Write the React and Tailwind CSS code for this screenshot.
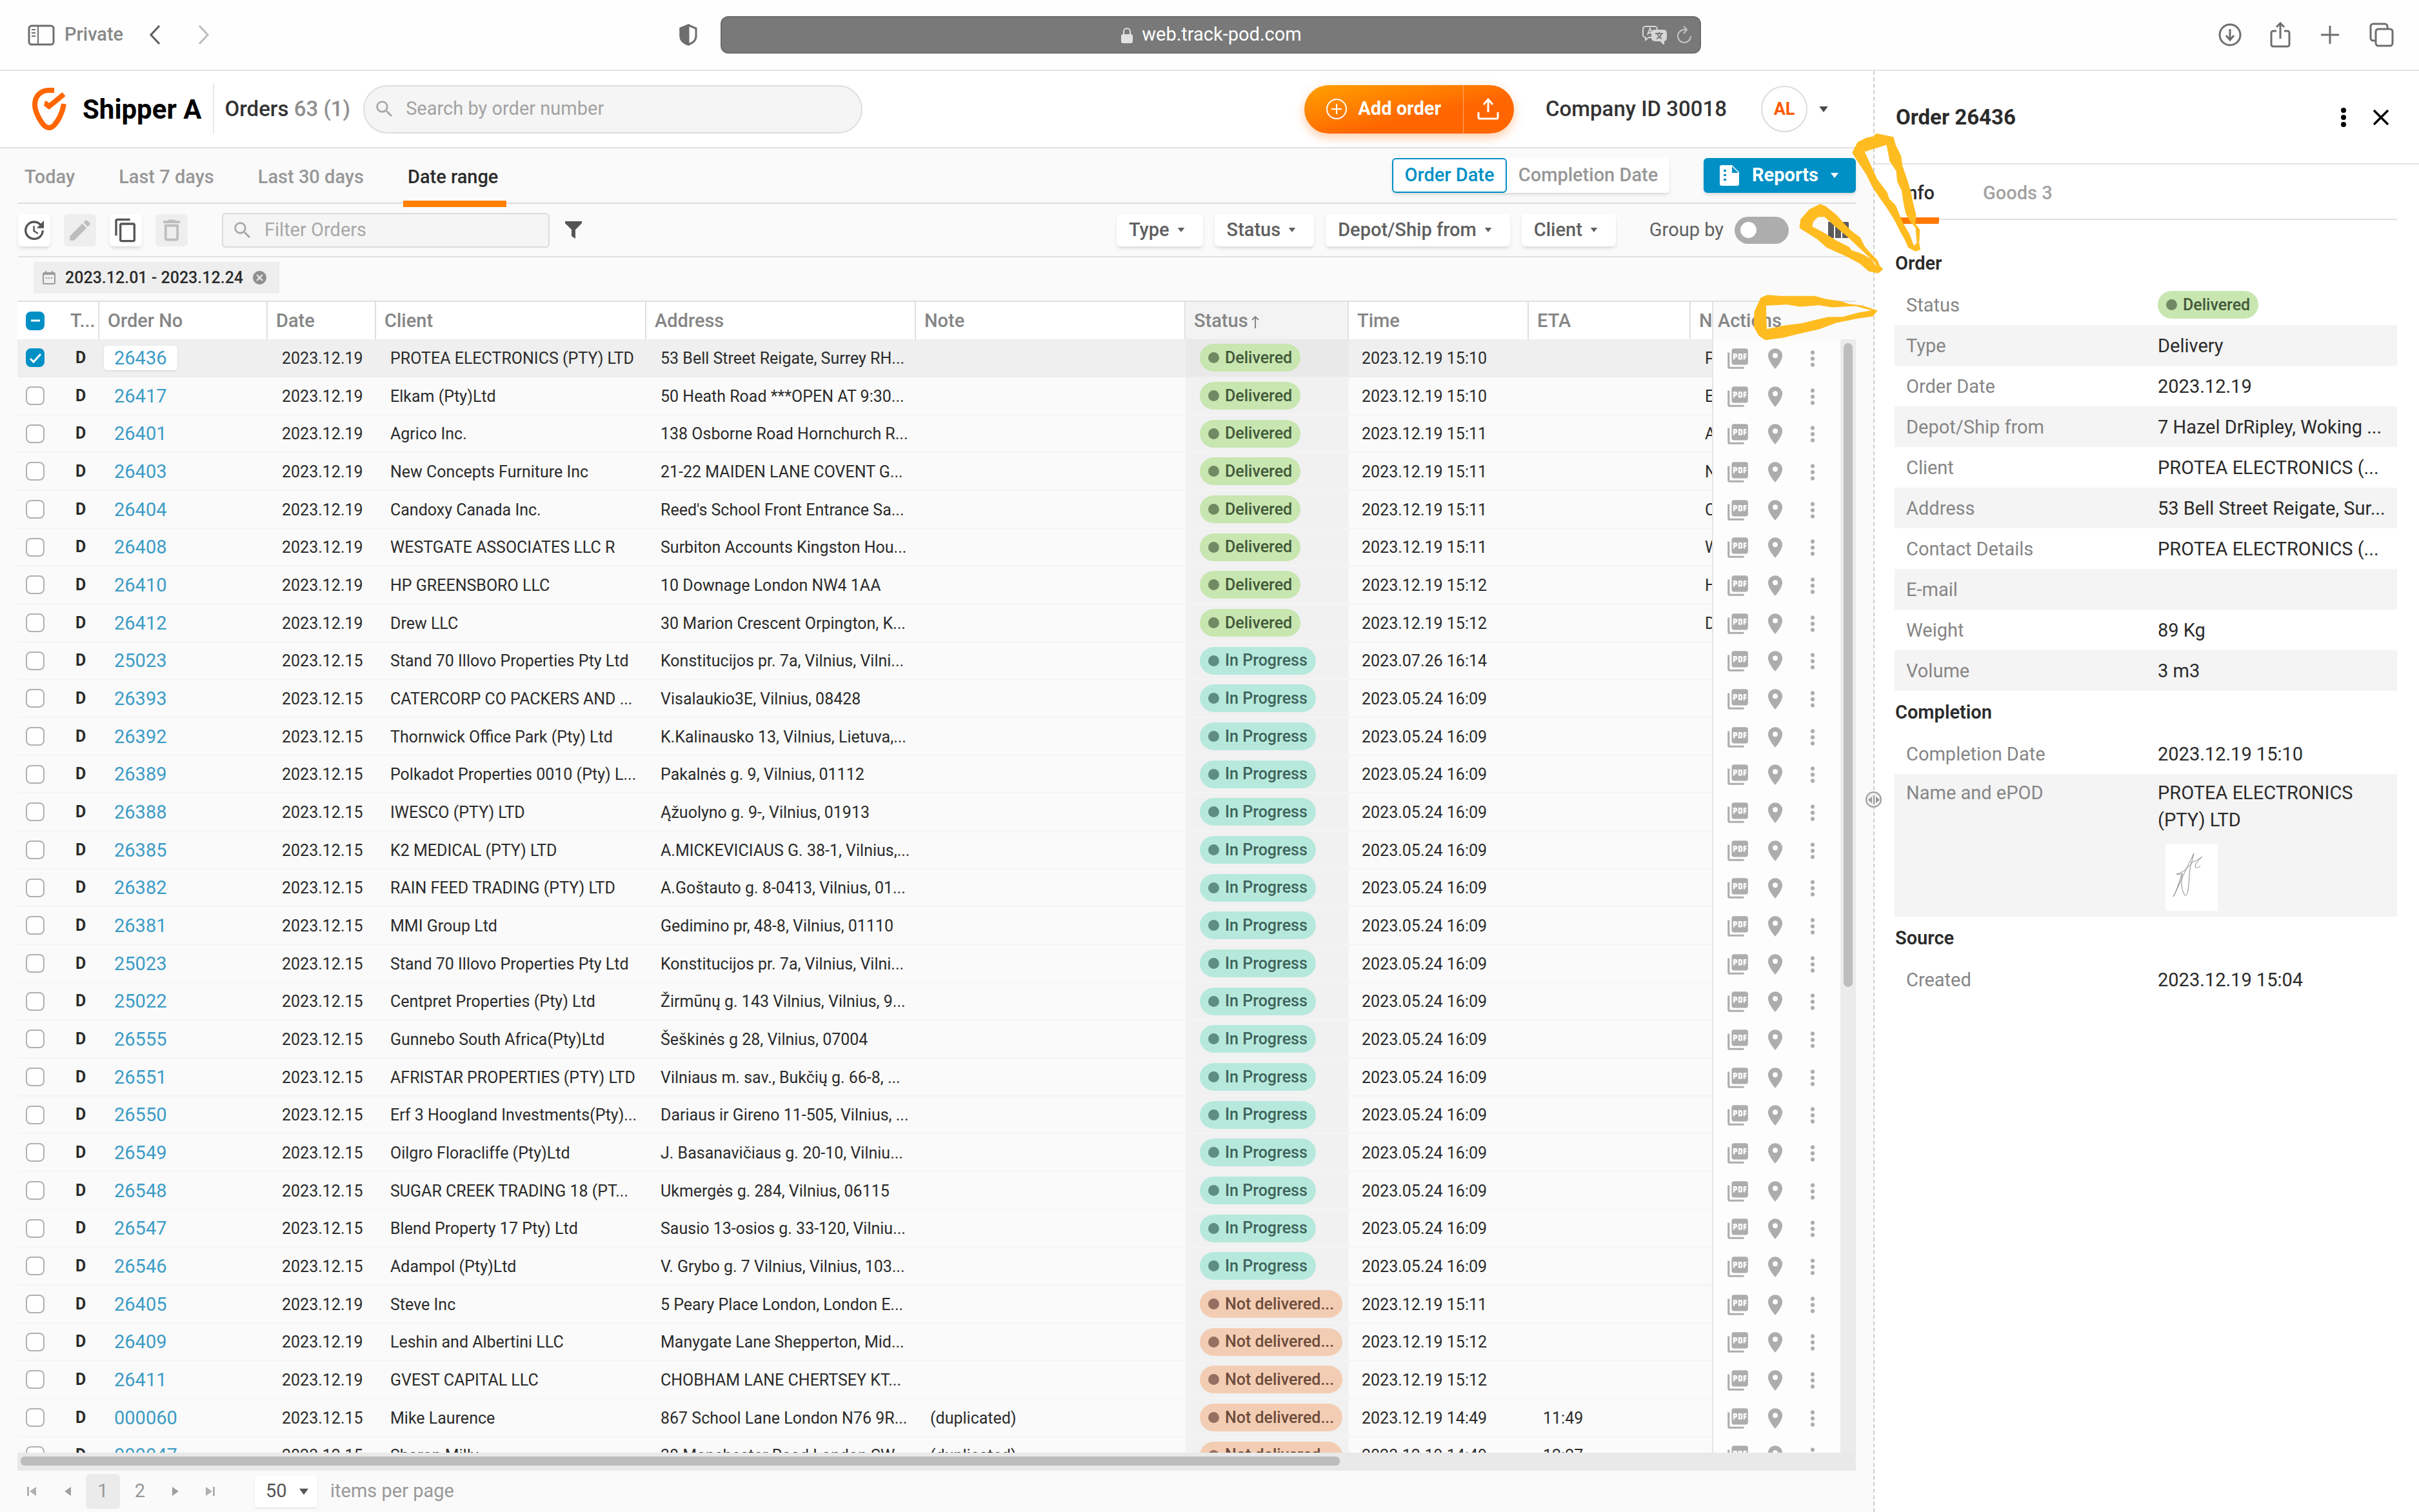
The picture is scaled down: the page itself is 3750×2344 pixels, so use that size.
import { useState } from 'react';
import {
    MdUpdate,
    MdEdit,
    MdContentCopy,
    MdDeleteOutline,
    MdSearch,
    MdPictureAsPdf,
    MdLocationOn,
    MdMoreVert,
    MdClose,
    MdCancel,
} from 'react-icons/md';

const delivered = [
    ['26436', 'PROTEA ELECTRONICS (PTY) LTD', '53 Bell Street Reigate, Surrey RH...', '15:10'],
    ['26417', 'Elkam (Pty)Ltd', '50 Heath Road ***OPEN AT 9:30...', '15:10'],
    ['26401', 'Agrico Inc.', '138 Osborne Road Hornchurch R...', '15:11'],
    ['26403', 'New Concepts Furniture Inc', '21-22 MAIDEN LANE COVENT G...', '15:11'],
    ['26404', 'Candoxy Canada Inc.', "Reed's School Front Entrance Sa...", '15:11'],
    ['26408', 'WESTGATE ASSOCIATES LLC R', 'Surbiton Accounts Kingston Hou...', '15:11'],
    ['26410', 'HP GREENSBORO LLC', '10 Downage London NW4 1AA', '15:12'],
    ['26412', 'Drew LLC', '30 Marion Crescent Orpington, K...', '15:12'],
];

const inProgress = [
    ['25023', 'Stand 70 Illovo Properties Pty Ltd', 'Konstitucijos pr. 7a, Vilnius, Vilni...', '2023.07.26 16:14'],
    ['26393', 'CATERCORP CO PACKERS AND ...', 'Visalaukio3E, Vilnius, 08428'],
    ['26392', 'Thornwick Office Park (Pty) Ltd', 'K.Kalinausko 13, Vilnius, Lietuva,...'],
    ['26389', 'Polkadot Properties 0010 (Pty) L...', 'Pakalnės g. 9, Vilnius, 01112'],
    ['26388', 'IWESCO (PTY) LTD', 'Ąžuolyno g. 9-, Vilnius, 01913'],
    ['26385', 'K2 MEDICAL (PTY) LTD', 'A.MICKEVICIAUS G. 38-1, Vilnius,...'],
    ['26382', 'RAIN FEED TRADING (PTY) LTD', 'A.Goštauto g. 8-0413, Vilnius, 01...'],
    ['26381', 'MMI Group Ltd', 'Gedimino pr, 48-8, Vilnius, 01110'],
    ['25023', 'Stand 70 Illovo Properties Pty Ltd', 'Konstitucijos pr. 7a, Vilnius, Vilni...'],
    ['25022', 'Centpret Properties (Pty) Ltd', 'Žirmūnų g. 143 Vilnius, Vilnius, 9...'],
    ['26555', 'Gunnebo South Africa(Pty)Ltd', 'Šeškinės g 28, Vilnius, 07004'],
    ['26551', 'AFRISTAR PROPERTIES (PTY) LTD', 'Vilniaus m. sav., Bukčių g. 66-8, ...'],
    ['26550', 'Erf 3 Hoogland Investments(Pty)...', 'Dariaus ir Gireno 11-505, Vilnius, ...'],
    ['26549', 'Oilgro Floracliffe (Pty)Ltd', 'J. Basanavičiaus g. 20-10, Vilniu...'],
    ['26548', 'SUGAR CREEK TRADING 18 (PT...', 'Ukmergės g. 284, Vilnius, 06115'],
    ['26547', 'Blend Property 17 Pty) Ltd', 'Sausio 13-osios g. 33-120, Vilniu...'],
    ['26546', 'Adampol (Pty)Ltd', 'V. Grybo g. 7 Vilnius, Vilnius, 103...'],
];

const orders = [
    ...delivered.map(([no, client, address, time]) => ({
        no,
        client,
        address,
        date: '2023.12.19',
        status: 'Delivered',
        time: `2023.12.19 ${time}`,
        name: client.charAt(0),
    })),
    ...inProgress.map(([no, client, address, time = '2023.05.24 16:09']) => ({
        no,
        client,
        address,
        date: '2023.12.15',
        status: 'In Progress',
        time,
    })),
    { no: '26405', date: '2023.12.19', client: 'Steve Inc', address: '5 Peary Place London, London E...', status: 'Not delivered...', time: '2023.12.19 15:11' },
    { no: '26409', date: '2023.12.19', client: 'Leshin and Albertini LLC', address: 'Manygate Lane Shepperton, Mid...', status: 'Not delivered...', time: '2023.12.19 15:12' },
    { no: '26411', date: '2023.12.19', client: 'GVEST CAPITAL LLC', address: 'CHOBHAM LANE CHERTSEY KT...', status: 'Not delivered...', time: '2023.12.19 15:12' },
    { no: '000060', date: '2023.12.15', client: 'Mike Laurence', address: '867 School Lane London N76 9R...', note: '(duplicated)', status: 'Not delivered...', time: '2023.12.19 14:49', eta: '11:49' },
    { no: '000047', date: '2023.12.15', client: 'Sharon Milly', address: '38 Manchester Road London SW...', note: '(duplicated)', status: 'Not delivered...', time: '2023.12.19 14:49', eta: '12:27' },
];

const badgeStyles = {
    Delivered: 'bg-[#c8e6b0] text-[#43593a]',
    'In Progress': 'bg-[#b6e9dc] text-[#3f635b]',
    'Not delivered...': 'bg-[#f3cdb3] text-[#6d4c3c]',
};

const dotStyles = {
    Delivered: 'bg-[#718a63]',
    'In Progress': 'bg-[#5f8d83]',
    'Not delivered...': 'bg-[#957062]',
};

const columns = [
    ['Order No', 'w-[261px]'],
    ['Date', 'w-[168px]'],
    ['Client', 'w-[419px]'],
    ['Address', 'w-[418px]'],
    ['Note', 'w-[418px]'],
    ['Status', 'w-[253px]'],
    ['Time', 'w-[279px]'],
    ['ETA', 'w-[251px]'],
    ['N', 'w-[33px]'],
];

const orderInfo = [
    ['Status', 'Delivered'],
    ['Type', 'Delivery'],
    ['Order Date', '2023.12.19'],
    ['Depot/Ship from', '7 Hazel DrRipley, Woking ...'],
    ['Client', 'PROTEA ELECTRONICS (...'],
    ['Address', '53 Bell Street Reigate, Sur...'],
    ['Contact Details', 'PROTEA ELECTRONICS (...'],
    ['E-mail', ''],
    ['Weight', '89 Kg'],
    ['Volume', '3 m3'],
];

function Badge({ status }) {
    return (
        <span
            className={`inline-flex h-[43px] items-center gap-[9px] rounded-full px-[13px] text-[25px] font-medium ${badgeStyles[status]}`}
        >
            <span className={`size-[17px] rounded-full ${dotStyles[status]}`} />
            {status}
        </span>
    );
}

function Checkbox({ label, checked, dash, onChange }) {
    return (
        <span className="grid size-[29px] place-items-center">
            <input
                type="checkbox"
                aria-label={label}
                checked={checked}
                onChange={onChange}
                className="col-start-1 row-start-1 size-[29px] appearance-none rounded-[8px] border-2 border-[#b0b0b0] bg-white checked:border-[#0090c5] checked:bg-[#0090c5]"
            />
            {checked && (
                <svg viewBox="0 0 24 24" className="pointer-events-none col-start-1 row-start-1 size-[24px]" fill="none" stroke="#fff" strokeWidth="3">
                    <path d={dash ? 'M5 12h14' : 'M4 13l5 5L20 6'} />
                </svg>
            )}
        </span>
    );
}

function Caret({ className }) {
    return (
        <svg viewBox="0 0 12 8" className={className} fill="currentColor">
            <path d="M0 0h12L6 8z" />
        </svg>
    );
}

function BrowserBar() {
    return (
        <header className="flex h-[110px] shrink-0 items-center border-b-2 border-[#e4e4e4] bg-[#fefefe] pr-[39px] pl-[43px] text-[#6e6e6e]">
            <div className="flex flex-1 items-center">
                <svg viewBox="0 0 42 33" className="h-[33px] w-[42px]" fill="none" stroke="currentColor" strokeWidth="3">
                    <rect x="2" y="2" width="38" height="29" rx="4" />
                    <path d="M16 2v29M6 8h6M6 13h6M6 18h6" strokeWidth="2" />
                </svg>
                <span className="ml-[15px] text-[29px] font-medium text-[#888]">Private</span>
                <button aria-label="Back" className="ml-[40px]">
                    <svg viewBox="0 0 18 30" className="h-[30px] w-[18px]" fill="none" stroke="#5c5c5c" strokeWidth="3">
                        <path d="M16 1L3 15l13 14" />
                    </svg>
                </button>
                <button aria-label="Forward" className="ml-[58px]">
                    <svg viewBox="0 0 18 30" className="h-[30px] w-[18px]" fill="none" stroke="#bdbdbd" strokeWidth="3">
                        <path d="M2 1l13 14L2 29" />
                    </svg>
                </button>
                <svg viewBox="0 0 30 34" className="mr-[35px] ml-auto h-[34px] w-[30px]" fill="none" stroke="currentColor" strokeWidth="3">
                    <path d="M15 2l12 5v12c0 7-6 11-12 13C9 30 3 26 3 19V7z" />
                    <path d="M15 2v30C9 30 3 26 3 19V7z" fill="currentColor" />
                </svg>
            </div>
            <div className="flex h-[58px] w-[1520px] items-center rounded-[12px] border-2 border-[#6c6c6c] bg-[#797979] pr-[12px] pl-[92px] text-white">
                <div className="flex flex-1 items-center justify-center gap-[14px]">
                    <svg viewBox="0 0 18 25" className="h-[25px] w-[18px]" fill="#e2e2e2">
                        <rect x="0" y="11" width="18" height="14" rx="3" />
                        <path d="M4 11V7a5 5 0 0 1 10 0v4" fill="none" stroke="#e2e2e2" strokeWidth="2" />
                    </svg>
                    <span className="text-[29px]">web.track-pod.com</span>
                </div>
                <button aria-label="Translate">
                    <svg viewBox="0 0 40 30" className="h-[30px] w-[40px]" fill="none" stroke="#d6d6d6" strokeWidth="2">
                        <path d="M6 2h14a4 4 0 0 1 4 4v4M6 2a4 4 0 0 0-4 4v9a4 4 0 0 0 4 4v4l5-4h4" />
                        <path d="M9 15l4-10 4 10M10 12h6" />
                        <path d="M20 8h14a4 4 0 0 1 4 4v8a4 4 0 0 1-4 4v5l-5-5h-9a4 4 0 0 1-4-4v-8a4 4 0 0 1 4-4z" fill="#d6d6d6" />
                        <path d="M21 13h12M27 11v2M23 21c5-2 7-5 7-8M31 21c-4-2-6-5-7-8" stroke="#797979" />
                    </svg>
                </button>
                <button aria-label="Reload" className="ml-[14px]">
                    <svg viewBox="0 0 24 28" className="h-[28px] w-[24px]" fill="none" stroke="#c4c4c4" strokeWidth="2">
                        <path d="M22 16a10 10 0 1 1-10-10h4M11 1l5 5-5 6" />
                    </svg>
                </button>
            </div>
            <div className="flex flex-1 items-center justify-end">
                <button aria-label="Downloads">
                    <svg viewBox="0 0 36 36" className="size-[36px]" fill="none" stroke="currentColor" strokeWidth="3">
                        <circle cx="18" cy="18" r="16" />
                        <path d="M18 9v16M12 19l6 7 6-7" />
                    </svg>
                </button>
                <button aria-label="Share" className="ml-[44px]">
                    <svg viewBox="0 0 32 40" className="h-[40px] w-[32px]" fill="none" stroke="currentColor" strokeWidth="3">
                        <path d="M10 14H5a3 3 0 0 0-3 3v18a3 3 0 0 0 3 3h22a3 3 0 0 0 3-3V17a3 3 0 0 0-3-3h-5M16 26V3M10 8l6-6 6 6" />
                    </svg>
                </button>
                <button aria-label="New tab" className="ml-[46px]">
                    <svg viewBox="0 0 30 30" className="size-[30px]" fill="none" stroke="currentColor" strokeWidth="3">
                        <path d="M15 1v28M1 15h28" />
                    </svg>
                </button>
                <button aria-label="Show tabs" className="ml-[46px]">
                    <svg viewBox="0 0 38 38" className="size-[38px]" fill="none" stroke="currentColor" strokeWidth="3">
                        <path d="M10 28H6a4 4 0 0 1-4-4V6a4 4 0 0 1 4-4h18a4 4 0 0 1 4 4v4" />
                        <rect x="10" y="10" width="26" height="26" rx="4" />
                    </svg>
                </button>
            </div>
        </header>
    );
}

function AppHeader() {
    return (
        <div className="flex h-[120px] shrink-0 items-center border-b-2 border-[#e2e2e2] bg-white pr-[69px] pl-[50px]">
            <svg viewBox="0 0 54 66" className="h-[66px] w-[54px]" fill="none" stroke="#ff6600" strokeWidth="8">
                <path d="M34 4H26C12 4 4 14 4 26c0 11 8 26 15 33 5 4 10 4 14 0 7-7 14-20 16-34" />
                <path d="M19 24c4 1 5 4 7 5L49 10" strokeWidth="8" />
            </svg>
            <span className="ml-[24px] text-[42px] font-bold text-black">Shipper A</span>
            <span className="ml-[18px] h-[78px] border-l-2 border-[#e8e8e8]" />
            <h1 className="ml-[16px] text-[33px] font-medium text-[#333]">
                Orders <span className="text-[#8f8f8f]">63 (1)</span>
            </h1>
            <label className="ml-[20px] flex h-[75px] w-[774px] items-center rounded-full border-2 border-[#dedede] bg-[#f5f5f5] pl-[14px]">
                <MdSearch className="size-[34px] text-[#a8a8a8]" />
                <input
                    aria-label="Search by order number"
                    placeholder="Search by order number"
                    className="ml-[16px] flex-1 bg-transparent text-[29px] outline-none placeholder:text-[#a2a2a2]"
                />
            </label>
            <div className="ml-auto flex h-[75px] rounded-full bg-linear-to-br from-[#ffa000] to-[#ff6600] to-60% text-white shadow-[0_6px_16px_rgba(255,110,0,0.35)]">
                <button className="flex items-center gap-[16px] border-r border-[#ffa566] pr-[34px] pl-[33px] text-[29px] font-bold">
                    <svg viewBox="0 0 34 34" className="size-[34px]" fill="none" stroke="#fff" strokeWidth="2">
                        <circle cx="17" cy="17" r="15" />
                        <path d="M17 9v16M9 17h16" />
                    </svg>
                    Add order
                </button>
                <button aria-label="Import orders" className="pr-[23px] pl-[21px]">
                    <svg viewBox="0 0 34 34" className="size-[34px]" fill="none" stroke="#fff" strokeWidth="3">
                        <path d="M17 22V3M10 10l7-8 7 8" />
                        <path d="M2 22v8a2 2 0 0 0 2 2h26a2 2 0 0 0 2-2v-8" />
                    </svg>
                </button>
            </div>
            <span className="ml-[49px] text-[33px] font-medium text-[#333]">Company ID 30018</span>
            <button className="ml-[53px] flex items-center gap-[17px] text-[27px] font-bold text-[#ff5a00]">
                <span className="grid size-[72px] place-items-center rounded-full border-2 border-[#dcdcdc] bg-white">AL</span>
                <Caret className="h-[9px] w-[16px] text-[#4a4a4a]" />
            </button>
        </div>
    );
}

function Tabs() {
    return (
        <div className="mr-[27px] ml-[28px] flex h-[86px] shrink-0 items-center border-b-2 border-[#dedede] text-[29px] font-medium">
            <nav className="flex h-full gap-[54px] pl-[3px] text-[#979797]">
                {['Today', 'Last 7 days', 'Last 30 days'].map((tab) => (
                    <button key={tab} className="px-[7px] pt-[6px]">
                        {tab}
                    </button>
                ))}
                <button className="-mb-[5px] h-[91px] border-b-10 border-[#ff7f00] pt-[8px] pr-[13px] pl-[7px] text-[#2b2b2b]">Date range</button>
            </nav>
            <div className="ml-auto flex h-[54px] rounded-[6px] bg-white shadow-md">
                <button className="w-[178px] rounded-[6px] border-2 border-[#0090c5] text-[#0090c5]">Order Date</button>
                <button className="w-[252px] text-[#979797]">Completion Date</button>
            </div>
            <button className="ml-[53px] flex h-[54px] w-[236px] items-center rounded-[6px] bg-[#0090c5] pl-[25px] text-white shadow-md">
                <svg viewBox="0 0 32 32" className="size-[32px]">
                    <path d="M3 0h16l11 11v18a3 3 0 0 1-3 3H3a3 3 0 0 1-3-3V3a3 3 0 0 1 3-3z" fill="#fff" />
                    <path d="M19 2v10h10zM6 7h4v3H6zM6 14h4v3H6zM6 21h4v3H6z" fill="#0090c5" />
                </svg>
                <span className="ml-[18px] font-bold">Reports</span>
                <Caret className="ml-[18px] h-[8px] w-[14px]" />
            </button>
        </div>
    );
}

function Toolbar() {
    const [grouped, setGrouped] = useState(false);

    return (
        <div className="mr-[38px] ml-[28px] flex h-[83px] shrink-0 items-center border-b-2 border-[#e2e2e2] text-[29px]">
            <div className="flex gap-[21px]">
                <button aria-label="Refresh" className="grid size-[50px] place-items-center rounded-[6px] bg-white text-[#555] shadow-md">
                    <MdUpdate className="size-[40px]" />
                </button>
                <button aria-label="Edit" className="grid size-[50px] place-items-center rounded-[6px] bg-[#eee] text-[#bdbdbd]">
                    <MdEdit className="size-[42px]" />
                </button>
                <button aria-label="Copy" className="grid size-[50px] place-items-center rounded-[6px] bg-white text-[#555] shadow-md">
                    <MdContentCopy className="size-[40px]" />
                </button>
                <button aria-label="Delete" className="grid size-[50px] place-items-center rounded-[6px] bg-[#eee] text-[#bdbdbd]">
                    <MdDeleteOutline className="size-[44px]" />
                </button>
            </div>
            <label className="ml-[53px] flex h-[54px] w-[508px] items-center rounded-[6px] border-2 border-[#dcdcdc] bg-[#f5f5f5] pl-[13px]">
                <MdSearch className="size-[34px] text-[#a8a8a8]" />
                <input
                    aria-label="Filter Orders"
                    placeholder="Filter Orders"
                    className="ml-[17px] w-[300px] bg-transparent text-[29px] outline-none placeholder:text-[#a8a8a8]"
                />
            </label>
            <button aria-label="Filter" className="ml-[24px]">
                <svg viewBox="0 0 26 27" className="h-[27px] w-[26px]" fill="#555">
                    <path d="M0 0h26v3L16 13v14l-6-4V13L0 3z" />
                </svg>
            </button>
            <div className="ml-auto flex items-center gap-[18px] font-medium text-[#606060]">
                {['Type', 'Status', 'Depot/Ship from', 'Client'].map((name) => (
                    <button key={name} className="flex h-[50px] items-center gap-[12px] rounded-[6px] bg-white px-[19px] shadow-md">
                        {name}
                        <Caret className="mr-[9px] h-[7px] w-[12px]" />
                    </button>
                ))}
            </div>
            <label className="ml-[52px] flex items-center gap-[17px] text-[#606060]">
                Group by
                <input
                    type="checkbox"
                    role="switch"
                    checked={grouped}
                    onChange={() => setGrouped(!grouped)}
                    className="flex h-[42px] w-[84px] appearance-none items-center rounded-full bg-[#adadad] px-[9px] before:size-[25px] before:rounded-full before:bg-white checked:justify-end checked:bg-[#0090c5]"
                />
            </label>
            <button aria-label="Columns" className="ml-[61px]">
                <svg viewBox="0 0 32 25" className="h-[25px] w-[32px]" fill="#5a5a5a">
                    <path d="M0 0h9v25H2a2 2 0 0 1-2-2zM11 0h9v25h-9zM22 0h8a2 2 0 0 1 2 2v21a2 2 0 0 1-2 2h-8z" />
                </svg>
            </button>
        </div>
    );
}

function DateChip() {
    return (
        <div className="flex h-[67px] shrink-0 items-center pb-[4px] pl-[52px]">
            <div className="flex h-[49px] items-center bg-[#eee] pr-[18px] pl-[14px] text-[25px] font-medium text-[#2b2b2b]">
                <svg viewBox="0 0 20 21" className="h-[21px] w-[20px]" fill="none" stroke="#9a9a9a" strokeWidth="2">
                    <rect x="1" y="3" width="18" height="17" rx="2" />
                    <path d="M5 0v4M15 0v4M5 11h2M9 11h2M13 11h2M1 5h18" />
                </svg>
                <span className="ml-[15px]">2023.12.01 - 2023.12.24</span>
                <button aria-label="Remove date filter" className="ml-[13px] text-[#8f8f8f]">
                    <MdCancel className="size-[25px]" />
                </button>
            </div>
        </div>
    );
}

function OrderRow({ order, selected, onSelect }) {
    const cell = `overflow-hidden border-b-2 whitespace-nowrap p-0 pl-[22px] ${selected ? 'border-[#ebebeb] bg-[#efefef]' : 'border-[#f4f4f4]'}`;

    return (
        <tr className="h-[59px] nth-[3n]:h-[58px]">
            <td className={`${cell} pl-[13px]!`}>
                <Checkbox label={`Select order ${order.no}`} checked={selected} onChange={onSelect} />
            </td>
            <td className={`${cell} pl-[17px]! font-bold`}>D</td>
            <td className={`${cell} pl-[7px]!`}>
                <a
                    href="#order"
                    className={`inline-block rounded-[5px] px-[16px] text-[29px] leading-[38px] text-[#3d9cc6] ${selected ? 'bg-white shadow-sm' : ''}`}
                >
                    {order.no}
                </a>
            </td>
            <td className={`${cell} pt-[2px]!`}>{order.date}</td>
            <td className={`${cell} pt-[2px]!`}>{order.client}</td>
            <td className={`${cell} pt-[2px]!`}>{order.address}</td>
            <td className={`${cell} pt-[2px]!`}>{order.note}</td>
            <td className={`${cell} ${selected ? 'bg-[#e9e9e9]!' : 'bg-[#f1f1f1]'}`}>
                <div className="flex">
                    <Badge status={order.status} />
                </div>
            </td>
            <td className={`${cell} pt-[2px]! pl-[20px]!`}>{order.time}</td>
            <td className={`${cell} pt-[2px]!`}>{order.eta}</td>
            <td className={`${cell} pt-[2px]!`}>{order.name}</td>
            <td className="border-l-2 border-[#e4e4e4] bg-[#fdfdfd] p-0 pl-[19px]">
                <div className="flex items-center text-[#adadad]">
                    <button aria-label="PDF">
                        <MdPictureAsPdf className="size-[38px]" />
                    </button>
                    <button aria-label="Show on map" className="ml-[20px]">
                        <MdLocationOn className="size-[38px]" />
                    </button>
                    <button aria-label="More" className="ml-[20px]">
                        <MdMoreVert className="size-[38px]" />
                    </button>
                </div>
            </td>
        </tr>
    );
}

function OrdersTable() {
    const [selected, setSelected] = useState([0]);

    const toggle = (index) => {
        setSelected(selected.includes(index) ? selected.filter((i) => i !== index) : [...selected, index]);
    };

    return (
        <div className="mr-[27px] ml-[27px] flex min-h-0 flex-1 flex-col">
            <div className="flex min-h-0 flex-1">
                <div className="min-w-0 flex-1 overflow-hidden">
                    <table className="w-full table-fixed border-separate border-spacing-0 text-[25px] leading-[30px] text-[#2b2b2b]">
                        <thead>
                            <tr className="h-[60px] text-left text-[29px] text-[#868686]">
                                <th className="w-[73px] border-t-2 border-[#e0e0e0] bg-white p-0 pl-[13px]">
                                    <Checkbox label="Select all" checked={selected.length > 0} dash onChange={() => setSelected([])} />
                                </th>
                                <th className="w-[54px] border-t-2 border-r-2 border-[#e0e0e0] bg-white p-0 pl-[9px] font-medium">T...</th>
                                {columns.map(([name, width]) => (
                                    <th
                                        key={name}
                                        className={`overflow-hidden border-t-2 border-[#e0e0e0] p-0 pl-[13px] font-medium whitespace-nowrap ${width} ${name === 'Status' ? 'bg-[#f3f3f3]' : 'bg-white'} ${name === 'N' ? '' : 'border-r-2'}`}
                                    >
                                        {name}
                                        {name === 'Status' && (
                                            <svg viewBox="0 0 12 20" className="ml-[5px] inline h-[20px] w-[12px]" fill="none" stroke="currentColor" strokeWidth="2">
                                                <path d="M6 20V2M1 7l5-5 5 5" />
                                            </svg>
                                        )}
                                    </th>
                                ))}
                                <th className="w-[199px] border-t-2 border-l-2 border-[#e0e0e0] bg-[#fafafa] p-0 pl-[7px] font-medium">Actions</th>
                            </tr>
                        </thead>
                        <tbody>
                            {orders.map((order, index) => (
                                <OrderRow key={index} order={order} selected={selected.includes(index)} onSelect={() => toggle(index)} />
                            ))}
                        </tbody>
                    </table>
                </div>
                <div className="flex w-[24px] flex-col">
                    <div className="h-[60px] border-t-2 border-[#e0e0e0]" />
                    <div className="flex-1 bg-[#ebebeb] px-[5px] pt-[6px]">
                        <div className="h-[58%] rounded-full bg-[#bdbdbd]" />
                    </div>
                </div>
            </div>
            <div className="h-[28px] shrink-0 bg-[#e9e9e9] px-[5px] py-[6px]">
                <div className="h-[14px] w-[72%] rounded-[6px] bg-[#bdbdbd]" />
            </div>
        </div>
    );
}

function Pager() {
    return (
        <footer className="flex h-[64px] shrink-0 items-center pl-[42px] text-[29px] text-[#999]">
            <button aria-label="First page">
                <svg viewBox="0 0 14 14" className="size-[14px]" fill="#b0b0b0">
                    <path d="M0 0h3v14H0zM14 0v14L4 7z" />
                </svg>
            </button>
            <button aria-label="Previous page" className="ml-[44px]">
                <svg viewBox="0 0 10 14" className="h-[14px] w-[10px]" fill="#a0a0a0">
                    <path d="M10 0v14L0 7z" />
                </svg>
            </button>
            <button className="ml-[23px] h-[54px] w-[53px] rounded-[6px] bg-[#ebebeb]">1</button>
            <button className="ml-[6px] w-[50px]">2</button>
            <button aria-label="Next page" className="ml-[25px]">
                <svg viewBox="0 0 10 14" className="h-[14px] w-[10px]" fill="#a0a0a0">
                    <path d="M0 0v14l10-7z" />
                </svg>
            </button>
            <button aria-label="Last page" className="ml-[42px]">
                <svg viewBox="0 0 14 14" className="size-[14px]" fill="#b0b0b0">
                    <path d="M11 0h3v14h-3zM0 0v14l10-7z" />
                </svg>
            </button>
            <label className="ml-[62px] flex items-center gap-[20px]">
                <span className="grid items-center">
                    <select className="col-start-1 row-start-1 h-[50px] w-[97px] appearance-none bg-white pl-[17px] text-[#555] shadow-sm" defaultValue="50">
                        <option>50</option>
                        <option>100</option>
                    </select>
                    <Caret className="pointer-events-none col-start-1 row-start-1 mr-[14px] h-[11px] w-[14px] justify-self-end text-[#555]" />
                </span>
                items per page
            </label>
        </footer>
    );
}

function Section({ title, children }) {
    return (
        <section>
            <h3 className="pl-px text-[29px] leading-[66px] font-semibold text-[#2b2b2b]">{title}</h3>
            <dl>{children}</dl>
        </section>
    );
}

function InfoRow({ label, children }) {
    return (
        <div className="grid min-h-[63px] grid-cols-[390px_1fr] items-center px-[18px] text-[29px] leading-[42px] even:bg-[#f4f4f4]">
            <dt className="text-[#868686]">{label}</dt>
            <dd className="whitespace-nowrap text-[#2b2b2b]">{children}</dd>
        </div>
    );
}

function OrderPanel() {
    return (
        <aside className="flex w-[844px] shrink-0 flex-col bg-white">
            <div className="flex h-[145px] shrink-0 items-center border-b-2 border-[#e4e4e4] pr-[38px] pl-[33px]">
                <h2 className="text-[33px] font-bold text-[#2b2b2b]">Order 26436</h2>
                <button aria-label="More" className="ml-auto text-black">
                    <svg viewBox="0 0 10 30" className="h-[30px] w-[10px]">
                        <circle cx="5" cy="4" r="4" />
                        <circle cx="5" cy="15" r="4" />
                        <circle cx="5" cy="26" r="4" />
                    </svg>
                </button>
                <button aria-label="Close" className="ml-[32px] text-black">
                    <MdClose className="size-[42px]" />
                </button>
            </div>
            <nav className="mr-[34px] ml-[32px] flex h-[86px] shrink-0 border-b-2 border-[#e0e0e0] pl-[3px] text-[29px] font-medium text-[#a2a2a2]">
                <button className="-mb-[6px] h-[92px] w-[65px] rounded-b-[3px] border-b-10 border-[#ff7800] pt-[8px] text-[#2b2b2b]">Info</button>
                <button className="ml-[58px] px-[10px] pt-[6px]">Goods 3</button>
            </nav>
            <div className="mr-[34px] ml-[31px] pt-[34px]">
                <Section title="Order">
                    {orderInfo.map(([label, value]) => (
                        <InfoRow key={label} label={label}>
                            {label === 'Status' ? (
                                <span className="flex">
                                    <Badge status={value} />
                                </span>
                            ) : (
                                value
                            )}
                        </InfoRow>
                    ))}
                </Section>
                <Section title="Completion">
                    <InfoRow label="Completion Date">2023.12.19 15:10</InfoRow>
                    <div className="grid h-[221px] grid-cols-[390px_1fr] bg-[#f4f4f4] px-[18px] pt-[8px] text-[29px] leading-[42px]">
                        <dt className="text-[#868686]">Name and ePOD</dt>
                        <dd className="text-[#2b2b2b]">
                            PROTEA ELECTRONICS
                            <br />
                            (PTY) LTD
                            <svg viewBox="0 0 81 104" className="mt-[16px] ml-[12px] h-[104px] w-[81px] bg-white" fill="none" stroke="#888" strokeWidth="1">
                                <path d="M12 82c6-10 10-26 14-36-4 2-8 2-9 1 8-1 16-8 23-16l4-16c-6 12-14 28-18 38-6 12-10 22-14 29M26 46c-2 12-2 24 4 34 4 2 5-6 6-18 1-12 1-22 4-33 5-1 10-4 17-9-6 6-11 10-11 16 3 2 6 1 8-2" />
                            </svg>
                        </dd>
                    </div>
                </Section>
                <Section title="Source">
                    <InfoRow label="Created">2023.12.19 15:04</InfoRow>
                </Section>
            </div>
        </aside>
    );
}

// hand-drawn marks pointing at the order panel
function Highlights() {
    return (
        <svg
            viewBox="0 0 1080 1080"
            className="pointer-events-none absolute top-[190px] right-[710px] size-[360px]"
            fill="#ffbc20"
            fillRule="evenodd"
            stroke="#ffbc20"
            strokeWidth="3"
            strokeLinejoin="round"
        >
            <path d="M575 140L600 92L640 72L675 65L685 52L725 60L765 68L775 105L800 155L806 200L830 270L845 320L855 370L870 430L866 470L888 500L884 560L890 590L868 598L835 580L820 545L800 510L775 460L745 410L700 345L672 305L640 240L600 180ZM630 135L735 102L750 180L780 225L785 275L805 315L815 380L825 425L845 460L870 490L876 560L860 575L840 520L805 460L775 385L745 355L735 325L690 265L660 200Z" />
            <path d="M330 490L335 450L375 405L425 380L450 390L500 430L540 475L570 505L610 535L630 575L660 610L690 640L700 665L716 682L695 700L650 690L610 655L545 620L500 600L455 580L410 540L370 515ZM386 484L440 512L500 550L560 580L570 595L620 612L660 635L690 675L684 655L650 622L600 575L550 528L490 478L445 437L415 438L392 460Z" />
            <path d="M120 880L150 815L180 803L240 808L400 808L450 822L520 832L560 845L620 852L690 875L670 900L600 910L500 930L420 960L330 980L250 1000L170 1010L140 990L118 950ZM172 850L270 845L330 855L420 848L480 858L590 852L670 874L600 886L530 905L460 906L400 920L340 935L260 945L175 962Z" />
        </svg>
    );
}

function App() {
    return (
        <div className="relative flex h-screen flex-col overflow-hidden bg-[#fafafa] font-['Roboto',sans-serif]">
            <BrowserBar />
            <div className="flex min-h-0 flex-1">
                <main className="relative flex min-w-0 flex-1 flex-col border-r-2 border-dashed border-[#cfcfcf]">
                    <AppHeader />
                    <Tabs />
                    <Toolbar />
                    <DateChip />
                    <OrdersTable />
                    <Pager />
                    <button
                        aria-label="Resize panel"
                        className="absolute top-1/2 -right-[13px] grid size-[25px] place-items-center rounded-full border-2 border-[#999] bg-[#f0f0f0]"
                    >
                        <svg viewBox="0 0 18 14" className="h-[14px] w-[18px]" fill="#999">
                            <path d="M8 0h2v14H8zM6 2v10L0 7zM12 2v10l6-5z" />
                        </svg>
                    </button>
                </main>
                <OrderPanel />
            </div>
            <Highlights />
        </div>
    );
}

export default App;
